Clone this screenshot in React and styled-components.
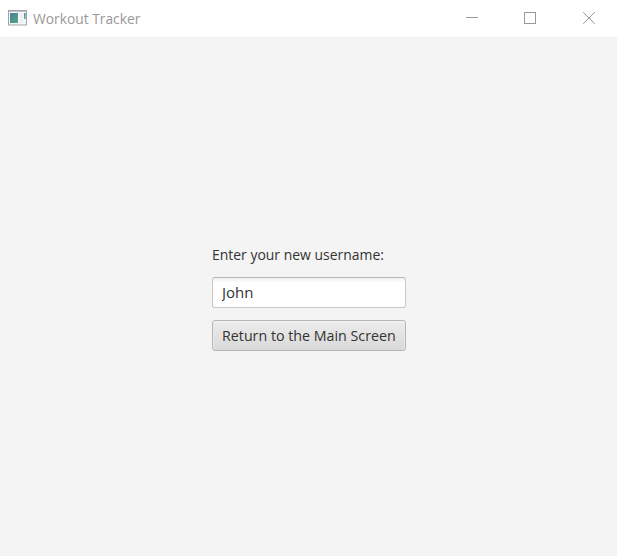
import React from 'react';
import styled, { createGlobalStyle } from 'styled-components';

const GlobalStyle = createGlobalStyle`
  * { box-sizing: border-box; }
  body { margin: 0; overflow: hidden; font-family: "Open Sans", "Noto Sans", sans-serif; }
`;
const Window = styled.div`
  display: flex; flex-direction: column; width: 617px; height: 556px; background: #f4f4f4;
`;
const TitleBar = styled.header`
  display: flex; align-items: center; height: 37px; padding-left: 8px; background: #fff;
`;
const AppIcon = styled.svg`
  display: block; flex: none; width: 19px; height: 16px; margin-bottom: 1px;
`;
const Title = styled.h1`
  flex: 1; margin: 0 0 2px 6px; font-size: 15px; line-height: 20px; font-weight: 400; color: #999;
  white-space: nowrap;
`;
const Condensed = styled.span`
  display: inline-block; white-space: nowrap; transform: scaleX(${({ $scale }) => $scale});
  transform-origin: left center;
`;
const WindowButton = styled.button`
  display: flex; flex: none; align-items: flex-start; width: ${({ $width }) => $width}px; height: 37px;
  padding: 12px 0 0 24px; border: 0; background: transparent; color: #999;
`;
const Glyph = styled.svg`
  display: block; width: 12px; height: 12px; fill: none; stroke: currentColor;
`;
const Form = styled.main`
  display: flex; flex-direction: column; width: 194px; margin: 207px 0 0 212px;
`;
const Label = styled.label`
  height: 21px; line-height: 21px; font-size: 15px; color: #333; white-space: nowrap;
`;
const Field = styled.input`
  width: 194px; height: 31px; margin-top: 12px; padding: 0 9px 2px; border: 1px solid #c8c8c8;
  border-top-color: #b5b5b5; border-radius: 3px;
  background: linear-gradient(#f0f0f0, #fff 5px);
  font: 15px "Open Sans", sans-serif; color: #333; outline: 0;
`;
const Button = styled.button`
  width: 194px; height: 31px; margin-top: 12px; padding: 0 9px 2px; border: 1px solid #b5b5b5;
  border-radius: 3px; background: linear-gradient(#ececec, #d9d9d9);
  box-shadow: inset 0 1px #f6f6f6, inset 1px 0 #e9e9e9, inset -1px 0 #e9e9e9;
  font: 15px "Open Sans", sans-serif; color: #333;
  text-align: left; white-space: nowrap;
`;

export default function App() {
  return (
    <>
      <GlobalStyle />
      <Window>
        <TitleBar>
          <AppIcon viewBox="0 0 19 16" aria-hidden="true">
            <defs>
              <linearGradient id="screen" x1="0" y1="0" x2="1" y2="1">
                <stop offset="0" stopColor="#477f9d" />
                <stop offset="1" stopColor="#55a584" />
              </linearGradient>
              <linearGradient id="meter" x1="0" y1="0" x2="0" y2="1">
                <stop offset="0" stopColor="#6688bd" />
                <stop offset="1" stopColor="#5fae83" />
              </linearGradient>
            </defs>
            <rect x="0.5" y="0.5" width="18" height="14.5" fill="#f6f7f8" stroke="#a0a4a8" />
            <path d="M1 1.5H18" stroke="#bcc2c8" />
            <rect x="2" y="3" width="8" height="10" fill="url(#screen)" />
            <rect x="11.5" y="3" width="3.5" height="10" fill="#eceff2" />
            <rect x="16" y="3" width="1.7" height="6" fill="url(#meter)" />
          </AppIcon>
          <Title><Condensed $scale={0.92}>Workout Tracker</Condensed></Title>
          <WindowButton $width={58} aria-label="Minimize">
            <Glyph><path d="M0 5.5H12" /></Glyph>
          </WindowButton>
          <WindowButton $width={59} aria-label="Maximize">
            <Glyph><rect x="0.5" y="0.5" width="11" height="11" /></Glyph>
          </WindowButton>
          <WindowButton $width={58} aria-label="Close">
            <Glyph><path d="M0.2 0.2L11.8 11.8M11.8 0.2L0.2 11.8" /></Glyph>
          </WindowButton>
        </TitleBar>
        <Form>
          <Label htmlFor="username"><Condensed $scale={0.93}>Enter your new username:</Condensed></Label>
          <Field id="username" defaultValue="John" />
          <Button><Condensed $scale={0.95}>Return to the Main Screen</Condensed></Button>
        </Form>
      </Window>
    </>
  );
}
